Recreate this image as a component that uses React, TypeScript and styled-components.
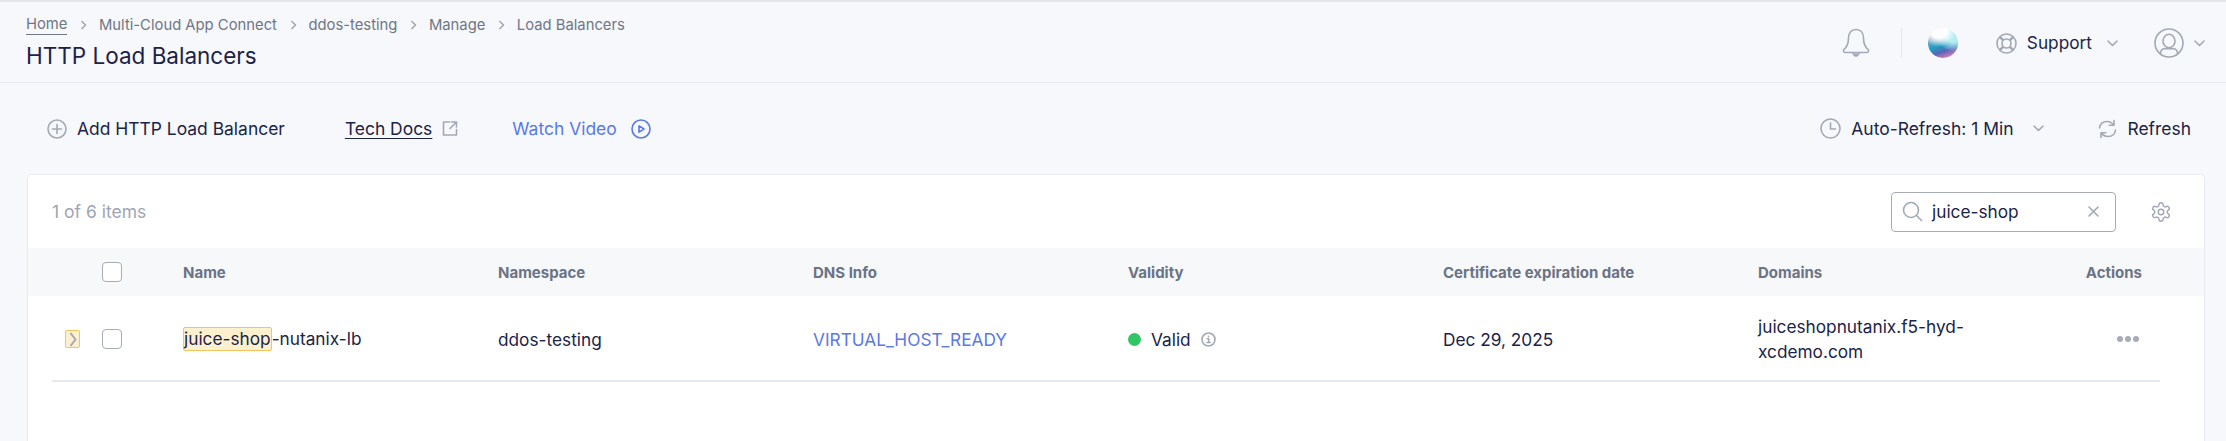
import React from "react";
import styled, { createGlobalStyle } from "styled-components";

const GlobalStyle = createGlobalStyle`
  html, body { margin: 0; padding: 0; height: 100%; overflow: hidden; background: #f6f8fb; }
  body { font-family: Inter, "Liberation Sans", sans-serif; color: #1b2347; }
  * { box-sizing: border-box; }
`;

const Page = styled.div`
  height: 441px;
  overflow: hidden;
  border-top: 2px solid #e4e5e7;
  background: #f6f8fb;
`;

const Header = styled.header`
  height: 81px;
  padding: 0 21px 0 26px;
  display: flex;
  justify-content: space-between;
  align-items: flex-start;
  border-bottom: 1px solid #e6e9ef;
`;

const TitleBlock = styled.div`
  padding-top: 13px;
`;

const Crumbs = styled.nav`
  display: flex;
  align-items: center;
  height: 20px;
  font-size: 14.8px;
  color: #6f7686;
`;

const CrumbHome = styled.span`
  border-bottom: 1px solid #6f7686;
  line-height: 19px;
`;

const CrumbArrow = styled.svg`
  width: 7px;
  height: 10px;
  margin: 0 11.5px 0 13px;
  fill: none;
  stroke: #9aa0ad;
  stroke-width: 1.3;
`;

const Title = styled.h1`
  margin: 7px 0 0;
  font-size: 22.5px;
  line-height: 28px;
  font-weight: 400;
  color: #1b2347;
`;

const HeaderTools = styled.div`
  display: flex;
  align-items: center;
  height: 30px;
  margin-top: 26px;
`;

const Divider = styled.div`
  width: 1px;
  height: 30px;
  margin: 0 26px 0 31px;
  background: #e3e6ec;
`;

const Orb = styled.div`
  width: 30px;
  height: 30px;
  border-radius: 50%;
  margin-right: 38px;
  background:
    radial-gradient(circle at 36% 6%, #ffffff 0 24%, rgba(255, 255, 255, 0) 50%),
    radial-gradient(circle at 85% 25%, #b5ecef 0 20%, rgba(181, 236, 239, 0) 48%),
    linear-gradient(162deg, #dfe8ee 0%, #7fa6c4 32%, #1f9fc4 54%, #5a66b8 72%, #e27fb0 92%);
`;

const IconSlot = styled.svg`
  flex: none;
  fill: none;
  stroke: #a3a8b6;
  stroke-width: 1.6;
  stroke-linecap: round;
  stroke-linejoin: round;
`;

const HeaderText = styled.span`
  font-size: 17.25px;
  line-height: 22px;
  color: #1b2347;
  margin: 0 15px 0 10px;
`;

const UserGap = styled.div`
  width: 36px;
`;

const Chevron = styled.svg`
  flex: none;
  width: 11px;
  height: 7px;
  fill: none;
  stroke: #a3a8b6;
  stroke-width: 1.6;
  stroke-linecap: round;
  stroke-linejoin: round;
`;

const SmallChevron = styled(Chevron)`
  margin-left: 10px;
`;

const Toolbar = styled.div`
  height: 91px;
  padding: 0 35px 0 47px;
  display: flex;
  align-items: center;
  justify-content: space-between;
`;

const ToolGroup = styled.div`
  display: flex;
  align-items: center;
`;

const ToolText = styled.span<{ $underline?: boolean; $link?: boolean }>`
  font-size: 17.45px;
  line-height: 22px;
  color: ${(p) => (p.$link ? "#5a78e6" : "#1b2347")};
  ${(p) => (p.$underline ? "text-decoration: underline; text-underline-offset: 3px; text-decoration-thickness: 1px;" : "")}
`;

const AddText = styled(ToolText)`
  margin: 0 60px 0 10px;
`;

const DocsIcon = styled(IconSlot)`
  margin: 0 54px 0 10px;
`;

const VideoIcon = styled(IconSlot)`
  margin-left: 14px;
  stroke: #5a78e6;
`;

const RefreshMenuText = styled(ToolText)`
  margin: 0 20px 0 10px;
`;

const RefreshText = styled(ToolText)`
  margin-left: 10px;
`;

const RefreshIcon = styled(IconSlot)`
  margin-left: 54px;
`;

const Card = styled.section`
  margin: 0 21px 0 27px;
  height: 270px;
  background: #fff;
  border: 1px solid #e8ebf1;
  border-bottom: none;
  border-radius: 5px 5px 0 0;
`;

const CardTop = styled.div`
  height: 73px;
  padding: 0 0 0 24px;
  display: flex;
  align-items: center;
  justify-content: space-between;
`;

const Count = styled.span`
  font-size: 17.5px;
  margin-bottom: 1px;
  color: #a0a5b3;
`;

const CardTools = styled.div`
  display: flex;
  align-items: center;
`;

const Search = styled.div`
  width: 225px;
  height: 40px;
  display: flex;
  align-items: center;
  padding: 0 16px 0 10px;
  border: 1px solid #a6abb8;
  border-radius: 4px;
  background: #fff;
`;

const SearchValue = styled.span`
  flex: 1;
  margin-left: 9px;
  font-size: 17.25px;
  color: #1b2347;
`;

const GearIcon = styled(IconSlot)`
  margin: 0 32px 0 34px;
`;

const gridTracks = "37px 81px repeat(6, 315px) 69px";

const HeadRow = styled.div`
  height: 48px;
  padding-left: 37px;
  display: grid;
  grid-template-columns: ${gridTracks};
  align-items: center;
  background: #f6f8fa;
  font-size: 15px;
  font-weight: 700;
  color: #6b7385;
`;

const BodyRow = styled.div`
  height: 86px;
  margin: 0 44px 0 24px;
  padding: 2px 0 0 13px;
  display: grid;
  grid-template-columns: ${gridTracks};
  align-items: center;
  border-bottom: 2px solid #e5e8f2;
  font-size: 17.25px;
  color: #1b2347;
`;

const HeadSpacer = styled.div``;

const ActionHead = styled.div`
  justify-self: end;
`;

const Checkbox = styled.span`
  display: block;
  width: 20px;
  height: 20px;
  border: 1px solid #a6abb8;
  border-radius: 4px;
  background: #fff;
`;

const Expand = styled.span`
  display: flex;
  align-items: center;
  justify-content: center;
  width: 15px;
  height: 18px;
  background: #fdf0cf;
  border: 1px solid #f6c45f;
  border-radius: 2px;
`;

const Mark = styled.mark`
  display: inline-block;
  color: inherit;
  line-height: 22px;
  background: #fdf0cf;
  border: 1px solid #f6c45f;
  border-radius: 2px;
`;

const Link = styled.span`
  color: #5a78e6;
`;

const Validity = styled.div`
  display: flex;
  align-items: center;
`;

const Dot = styled.span`
  width: 13px;
  height: 13px;
  border-radius: 50%;
  background: #2fc763;
  margin-right: 10px;
`;

const InfoIcon = styled(IconSlot)`
  margin-left: 10px;
`;

const DomainCell = styled.div`
  max-width: 270px;
  line-height: 25px;
`;

const ActionCell = styled.div`
  justify-self: end;
  padding-right: 3px;
  display: flex;
  gap: 2px;
`;

const ActionDot = styled.span`
  width: 6px;
  height: 6px;
  border-radius: 50%;
  background: #a7acba;
`;

const Arrow = () => (
  <CrumbArrow viewBox="0 0 7 10">
    <path d="M1.5 1l4 4-4 4" />
  </CrumbArrow>
);

const ChevronIcon = () => (
  <Chevron viewBox="0 0 11 7">
    <path d="M1 1l4.5 4.5L10 1" />
  </Chevron>
);

export default function App() {
  return (
    <Page>
      <GlobalStyle />
      <Header>
        <TitleBlock>
          <Crumbs>
            <CrumbHome>Home</CrumbHome>
            <Arrow />
            Multi-Cloud App Connect
            <Arrow />
            ddos-testing
            <Arrow />
            Manage
            <Arrow />
            Load Balancers
          </Crumbs>
          <Title>HTTP Load Balancers</Title>
        </TitleBlock>
        <HeaderTools>
          <IconSlot width="28" height="30" viewBox="0 0 28 30">
            <path d="M14 1.500c-5 0-7.500 4-7.500 8.500 0 5-1.500 9-4.500 11.500-1 1-.5 3 1 3h22c1.500 0 2-2 1-3-3-2.500-4.500-6.500-4.500-11.500 0-4.500-2.500-8.500-7.500-8.500z" />
            <path d="M11 25.500c.8 1.800 1.800 2.600 3 2.600s2.200-.8 3-2.600" fill="#a3a8b6" />
          </IconSlot>
          <Divider />
          <Orb />
          <IconSlot width="21" height="21" viewBox="0 0 21 21">
            <circle cx="10.500" cy="10.500" r="9.500" />
            <circle cx="10.500" cy="10.500" r="4.500" />
            <path d="M3.800 3.800l3.500 3.500M17.200 3.800l-3.500 3.500M3.800 17.200l3.500-3.500M17.200 17.200l-3.500-3.500" strokeWidth="2.400" strokeLinecap="butt" />
          </IconSlot>
          <HeaderText>Support</HeaderText>
          <ChevronIcon />
          <UserGap />
          <IconSlot width="30" height="30" viewBox="0 0 30 30">
            <circle cx="15" cy="15" r="14" />
            <ellipse cx="15" cy="13" rx="6" ry="6.800" />
            <path d="M6.500 25.500c0-3.200 2-4.800 4.500-4.800h8c2.500 0 4.500 1.600 4.500 4.800" />
          </IconSlot>
          <SmallChevron viewBox="0 0 11 7">
            <path d="M1 1l4.500 4.500L10 1" />
          </SmallChevron>
        </HeaderTools>
      </Header>
      <Toolbar>
        <ToolGroup>
          <IconSlot width="20" height="20" viewBox="0 0 20 20">
            <circle cx="10" cy="10" r="9" />
            <path d="M10 5.500v9M5.500 10h9" />
          </IconSlot>
          <AddText>Add HTTP Load Balancer</AddText>
          <ToolText $underline>Tech Docs</ToolText>
          <DocsIcon width="16" height="15" viewBox="0 0 16 15">
            <path d="M14.500 8.500v5.500h-13v-13h6" />
            <path d="M9.500 1h5v5M14.500 1l-6.500 6.500" />
          </DocsIcon>
          <ToolText $link>Watch Video</ToolText>
          <VideoIcon width="20" height="20" viewBox="0 0 20 20">
            <circle cx="10" cy="10" r="9" />
            <path d="M8 6.800l5 3.200-5 3.200z" />
          </VideoIcon>
        </ToolGroup>
        <ToolGroup>
          <IconSlot width="21" height="21" viewBox="0 0 21 21">
            <circle cx="10.500" cy="10.500" r="9.500" />
            <path d="M10.500 5v6h5" />
          </IconSlot>
          <RefreshMenuText>Auto-Refresh: 1 Min</RefreshMenuText>
          <ChevronIcon />
          <RefreshIcon width="19" height="20" viewBox="0 0 19 20">
            <path d="M1.500 9c.5-4 3.500-6.500 7.500-6.500 3 0 5 1.300 6.500 3.500M16 1.500v4.800h-4.800" />
            <path d="M17.500 11c-.5 4-3.500 6.500-7.500 6.500-3 0-5-1.300-6.500-3.500M3 18.500v-4.800h4.800" />
          </RefreshIcon>
          <RefreshText>Refresh</RefreshText>
        </ToolGroup>
      </Toolbar>
      <Card>
        <CardTop>
          <Count>1 of 6 items</Count>
          <CardTools>
            <Search>
              <IconSlot width="21" height="21" viewBox="0 0 21 21">
                <circle cx="9" cy="9" r="7.500" />
                <path d="M14.500 14.500l5 5" />
              </IconSlot>
              <SearchValue>juice-shop</SearchValue>
              <IconSlot width="11" height="11" viewBox="0 0 11 11">
                <path d="M1 1l9 9M10 1l-9 9" />
              </IconSlot>
            </Search>
            <GearIcon width="22" height="22" viewBox="0 0 24 24">
              <path d="M12.220 2h-.44a2 2 0 0 0-2 2v.18a2 2 0 0 1-1 1.730l-.43.25a2 2 0 0 1-2 0l-.15-.08a2 2 0 0 0-2.730.73l-.22.38a2 2 0 0 0 .73 2.730l.15.1a2 2 0 0 1 1 1.720v.51a2 2 0 0 1-1 1.740l-.15.09a2 2 0 0 0-.73 2.730l.22.38a2 2 0 0 0 2.730.73l.15-.08a2 2 0 0 1 2 0l.43.25a2 2 0 0 1 1 1.730V20a2 2 0 0 0 2 2h.44a2 2 0 0 0 2-2v-.18a2 2 0 0 1 1-1.730l.43-.25a2 2 0 0 1 2 0l.15.08a2 2 0 0 0 2.730-.73l.22-.39a2 2 0 0 0-.73-2.730l-.15-.08a2 2 0 0 1-1-1.740v-.5a2 2 0 0 1 1-1.740l.15-.09a2 2 0 0 0 .73-2.730l-.22-.38a2 2 0 0 0-2.730-.73l-.15.08a2 2 0 0 1-2 0l-.43-.25a2 2 0 0 1-1-1.730V4a2 2 0 0 0-2-2z" />
              <circle cx="12" cy="12" r="3" />
            </GearIcon>
          </CardTools>
        </CardTop>
        <HeadRow>
          <HeadSpacer />
          <Checkbox />
          <div>Name</div>
          <div>Namespace</div>
          <div>DNS Info</div>
          <div>Validity</div>
          <div>Certificate expiration date</div>
          <div>Domains</div>
          <ActionHead>Actions</ActionHead>
        </HeadRow>
        <BodyRow>
          <Expand>
            <IconSlot width="8" height="15" viewBox="0 0 8 15">
              <path d="M1.500 1l5 6.500-5 6.500" strokeWidth="2" strokeLinecap="butt" />
            </IconSlot>
          </Expand>
          <Checkbox />
          <div>
            <Mark>juice-shop</Mark>-nutanix-lb
          </div>
          <div>ddos-testing</div>
          <Link>VIRTUAL_HOST_READY</Link>
          <Validity>
            <Dot />
            Valid
            <InfoIcon width="15" height="15" viewBox="0 0 15 15">
              <circle cx="7.500" cy="7.500" r="6.500" />
              <path d="M6.200 6.800h1.500v3.500M6 10.500h3.200M7.500 4.200v.4" />
            </InfoIcon>
          </Validity>
          <div>Dec 29, 2025</div>
          <DomainCell>juiceshopnutanix.f5-hyd-xcdemo.com</DomainCell>
          <ActionCell>
            <ActionDot />
            <ActionDot />
            <ActionDot />
          </ActionCell>
        </BodyRow>
      </Card>
    </Page>
  );
}
